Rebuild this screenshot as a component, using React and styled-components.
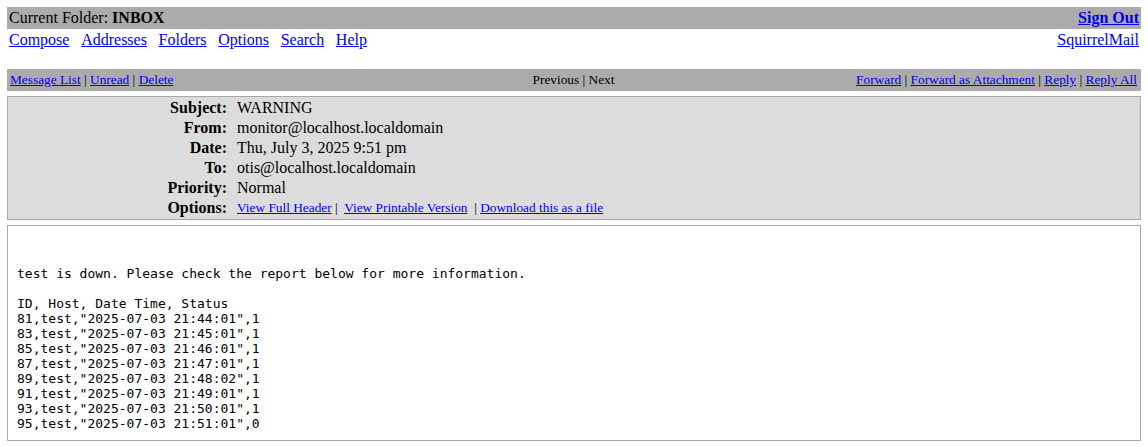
import React from "react";
import styled, { createGlobalStyle } from "styled-components";

const GlobalStyle = createGlobalStyle`
  html, body { background: #ffffff; }
  body {
    margin: 7px;
    font-family: "Liberation Serif", "Times New Roman", serif;
    font-size: 16px;
    color: #000000;
  }
  a { color: #0000ee; text-decoration: underline; }
`;

const Page = styled.div`
  display: flex;
  flex-direction: column;
`;

const TopBar = styled.div`
  display: flex;
  justify-content: space-between;
  align-items: center;
  height: 22px;
  padding: 0 2px;
  background: #ababab;
  white-space: pre;
`;

const SignOut = styled.a`
  font-weight: bold;
`;

const NavRow = styled.div`
  display: flex;
  justify-content: space-between;
  align-items: center;
  height: 22px;
  padding: 0 2px;
  margin-bottom: 18px;
`;

const NavLinks = styled.div`
  display: flex;
  gap: 11.7px;
`;

const Toolbar = styled.div`
  display: grid;
  grid-template-columns: 1fr auto 1fr;
  align-items: center;
  height: 22px;
  padding: 0 4px 0 3px;
  background: #ababab;
  font-size: 13.333px;
  white-space: pre;
`;

const ToolGroup = styled.div`
  justify-self: ${(p) => p.$align || "start"};
`;

const HeaderBox = styled.div`
  margin-top: 5px;
  border: 1px solid #a8a8a8;
  background: #dcdcdc;
  padding: 1px 0;
  display: grid;
  grid-template-columns: 219px 1fr;
  column-gap: 10px;
`;

const Label = styled.div`
  text-align: right;
  font-weight: bold;
  height: 20px;
  line-height: 20px;
`;

const Value = styled.div`
  height: 20px;
  line-height: 20px;
  white-space: pre;
  font-size: ${(p) => (p.$small ? "13.333px" : "16px")};
`;

const BodyBox = styled.div`
  margin-top: 5px;
  border: 1px solid #a8a8a8;
  background: #ffffff;
  padding: 10px 9px 9px;
`;

const Pre = styled.pre`
  margin: 0;
  font-family: "DejaVu Sans Mono", monospace;
  font-size: 13px;
  line-height: 15px;
`;

const headers = [
  ["Subject:", "WARNING"],
  ["From:", "monitor@localhost.localdomain"],
  ["Date:", "Thu, July 3, 2025 9:51 pm"],
  ["To:", "otis@localhost.localdomain"],
  ["Priority:", "Normal"],
];

const body = `

test is down. Please check the report below for more information.

ID, Host, Date Time, Status
81,test,"2025-07-03 21:44:01",1
83,test,"2025-07-03 21:45:01",1
85,test,"2025-07-03 21:46:01",1
87,test,"2025-07-03 21:47:01",1
89,test,"2025-07-03 21:48:02",1
91,test,"2025-07-03 21:49:01",1
93,test,"2025-07-03 21:50:01",1
95,test,"2025-07-03 21:51:01",0`;

export default function App() {
  return (
    <Page>
      <GlobalStyle />
      <TopBar>
        <span>
          Current Folder: <b>INBOX</b>
        </span>
        <SignOut href="#">Sign Out</SignOut>
      </TopBar>
      <NavRow>
        <NavLinks>
          <a href="#">Compose</a>
          <a href="#">Addresses</a>
          <a href="#">Folders</a>
          <a href="#">Options</a>
          <a href="#">Search</a>
          <a href="#">Help</a>
        </NavLinks>
        <a href="#">SquirrelMail</a>
      </NavRow>
      <Toolbar>
        <ToolGroup>
          <a href="#">Message List</a> | <a href="#">Unread</a> |{" "}
          <a href="#">Delete</a>
        </ToolGroup>
        <ToolGroup $align="center">Previous | Next</ToolGroup>
        <ToolGroup $align="end">
          <a href="#">Forward</a> | <a href="#">Forward as Attachment</a> |{" "}
          <a href="#">Reply</a> | <a href="#">Reply All</a>
        </ToolGroup>
      </Toolbar>
      <HeaderBox>
        {headers.map(([l, v]) => (
          <React.Fragment key={l}>
            <Label>{l}</Label>
            <Value>{v}</Value>
          </React.Fragment>
        ))}
        <Label>Options:</Label>
        <Value $small>
          <a href="#">View Full Header</a>{" |  "}
          <a href="#">View Printable Version</a>{"  | "}
          <a href="#">Download this as a file</a>
        </Value>
      </HeaderBox>
      <BodyBox>
        <Pre>{body}</Pre>
      </BodyBox>
    </Page>
  );
}
